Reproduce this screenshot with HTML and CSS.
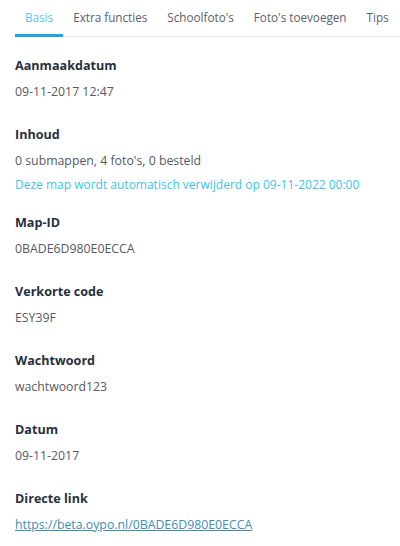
FILE: index.html
```html
<!DOCTYPE html>
<html lang="nl">
<head>
  <meta charset="UTF-8">
  <meta name="viewport" content="width=device-width, initial-scale=1.0">
  <title>Map</title>
  <link rel="stylesheet" href="styles.css">
</head>
<body>
<div class="tabs">
  <div class="tab active">Basis</div>
  <div class="tab">Extra functies</div>
  <div class="tab">Schoolfoto's</div>
  <div class="tab">Foto's toevoegen</div>
  <div class="tab">Tips</div>
</div>

<div class="details">
  <div class="item">
    <div class="label">Aanmaakdatum</div>
    <div class="value">09-11-2017 12:47</div>
  </div>
  <div class="item">
    <div class="label">Inhoud</div>
    <div class="value">0 submappen, 4 foto's, 0 besteld</div>
    <div class="note">Deze map wordt automatisch verwijderd op 09-11-2022 00:00</div>
  </div>
  <div class="item">
    <div class="label">Map-ID</div>
    <div class="value">0BADE6D980E0ECCA</div>
  </div>
  <div class="item">
    <div class="label">Verkorte code</div>
    <div class="value">ESY39F</div>
  </div>
  <div class="item">
    <div class="label">Wachtwoord</div>
    <div class="value">wachtwoord123</div>
  </div>
  <div class="item">
    <div class="label">Datum</div>
    <div class="value">09-11-2017</div>
  </div>
  <div class="item">
    <div class="label">Directe link</div>
    <div class="value"><a href="#">https://beta.oypo.nl/0BADE6D980E0ECCA</a></div>
  </div>
</div>
</body>
</html>
```

FILE: styles.css
```css
body {
  margin: 0;
  padding: 0 0 0 15px;
  font-family: "Open Sans", sans-serif;
  font-size: 12.3px;
  color: #555a64;
  overflow: hidden;
}
.tabs {
  display: flex;
  border-bottom: 1px solid #e2e5ea;
  white-space: nowrap;
}
.tab {
  padding: 7px 10px 7px;
  line-height: 20px;
  font-size: 11.7px;
  color: #5a6070;
  border-bottom: 3px solid transparent;
  margin-bottom: -1px;
}
.tab.active {
  color: #5bc4ee;
  border-bottom-color: #1aa6df;
}
.details {
  padding-top: 17px;
}
.item {
  margin-bottom: 19px;
}
.label {
  font-weight: 700;
  font-size: 12.6px;
  color: #283040;
  line-height: 24px;
}
.value {
  line-height: 24px;
  margin-top: 2px;
}
.note {
  color: #3ec3f2;
  font-size: 12px;
  line-height: 24px;
  margin-bottom: -5px;
}
a {
  color: #3d8fb8;
}
```
